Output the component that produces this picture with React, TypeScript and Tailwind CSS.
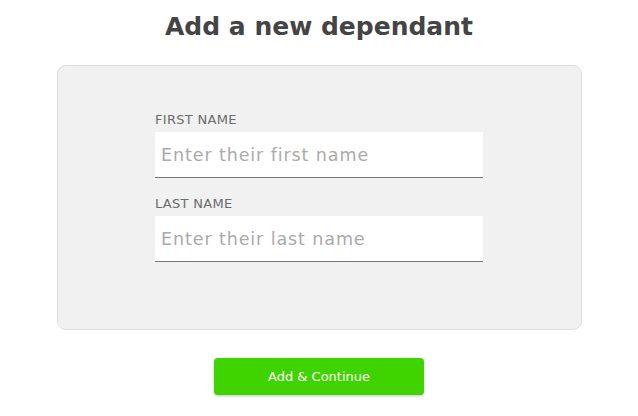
export default function App() {
  return (
    <div className="w-[638px] h-[416px] bg-white flex flex-col items-center" style={{ fontFamily: '"DejaVu Sans", sans-serif' }}>
      <h1 className="mt-[9px] h-[36px] text-[25px] leading-[36px] font-bold text-[#444444] tracking-[0px]">Add a new dependant</h1>
      <div className="mt-[20px] w-[525px] h-[265px] bg-[#f1f1f1] border border-[#dddddd] rounded-[9px] flex flex-col items-center pt-[46px]">
        <div className="w-[328px] flex flex-col">
          <label className="text-[13px] leading-[16px] text-[#6b6b6b] tracking-[0.3px]">FIRST NAME</label>
          <input
            className="mt-[4px] h-[46px] bg-white border-b border-[#777777] px-[6px] text-[17.5px] tracking-[0.9px] text-[#444] placeholder:text-[#aaaaaa] outline-none"
            placeholder="Enter their first name"
          />
          <label className="mt-[18px] text-[13px] leading-[16px] text-[#6b6b6b] tracking-[0.3px]">LAST NAME</label>
          <input
            className="mt-[4px] h-[46px] bg-white border-b border-[#777777] px-[6px] text-[17.5px] tracking-[0.9px] text-[#444] placeholder:text-[#aaaaaa] outline-none"
            placeholder="Enter their last name"
          />
        </div>
      </div>
      <button className="mt-[28px] w-[210px] h-[37px] bg-[#3fd400] rounded-[4px] text-white text-[13px] shadow-[0_1px_3px_rgba(0,0,0,0.25)]">
        Add &amp; Continue
      </button>
    </div>
  );
}
